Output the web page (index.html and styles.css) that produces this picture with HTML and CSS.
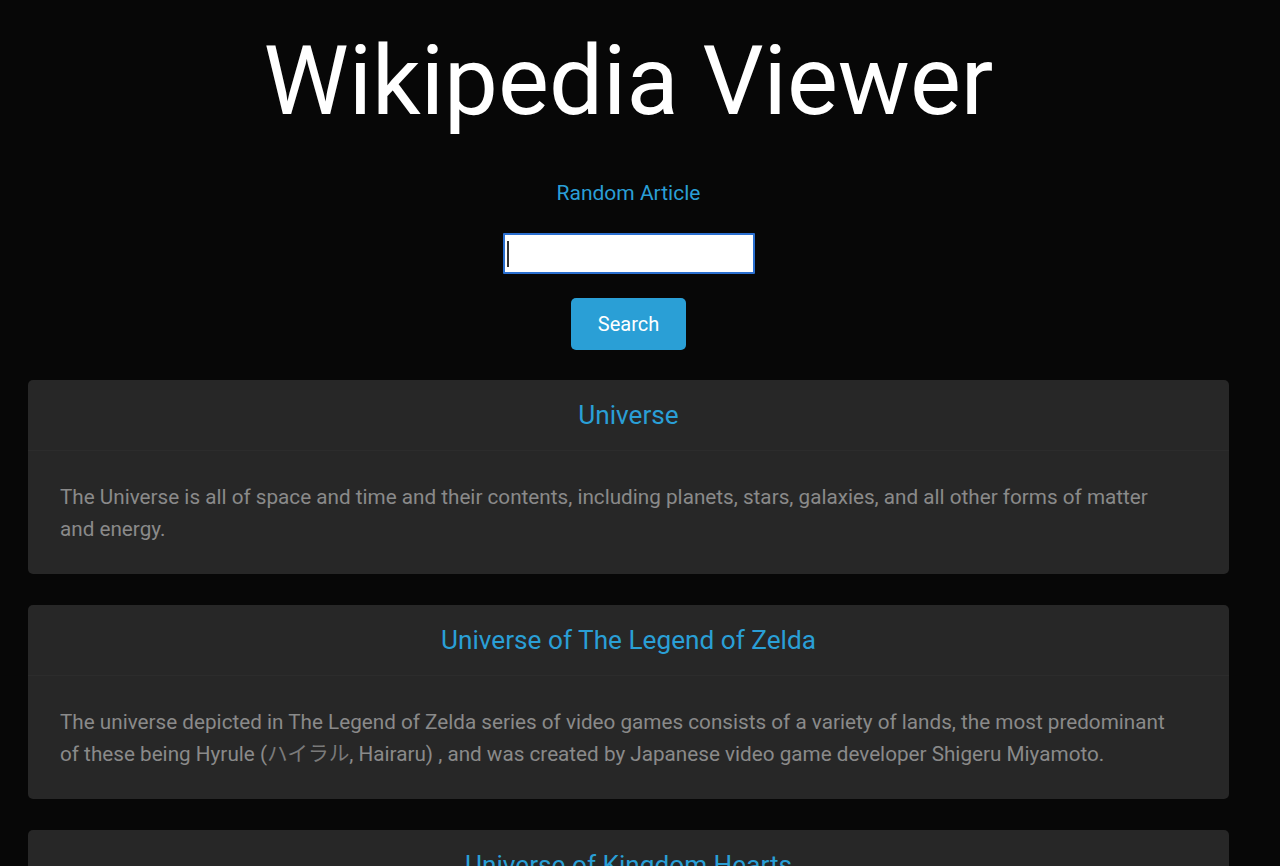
FILE: index.html
```html
<!DOCTYPE html>
<html lang="en">
<head>
<meta charset="utf-8">
<title>Wikipedia Viewer</title>
<link rel="stylesheet" href="styles.css">
</head>
<body>
<div class="page">
  <h1 class="title">Wikipedia Viewer</h1>
  <div class="controls">
    <a class="random" href="#">Random Article</a>
    <div class="input-wrap">
      <input class="search-input" type="text">
      <span class="caret"></span>
    </div>
    <button class="search-btn" type="button">Search</button>
  </div>
  <div class="results">
    <div class="card">
      <div class="card-head"><a href="#">Universe</a></div>
      <div class="card-body">The Universe is all of space and time and their contents, including planets, stars, galaxies, and all other forms of matter and energy.</div>
    </div>
    <div class="card">
      <div class="card-head"><a href="#">Universe of The Legend of Zelda</a></div>
      <div class="card-body">The universe depicted in The Legend of Zelda series of video games consists of a variety of lands, the most predominant of these being Hyrule (<span class="jp">ハイラル</span>, Hairaru) , and was created by Japanese video game developer Shigeru Miyamoto.</div>
    </div>
    <div class="card">
      <div class="card-head"><a href="#">Universe of Kingdom Hearts</a></div>
      <div class="card-body">The universe of the Kingdom Hearts series consists of many worlds.</div>
    </div>
  </div>
</div>
</body>
</html>
```
FILE: styles.css
```css
html, body {
  margin: 0;
  padding: 0;
  background: #070707;
  height: 100%;
  overflow: hidden;
}
body {
  font-family: Roboto, "Noto Sans CJK JP", sans-serif;
  color: #888;
}
.page {
  width: 1201px;
  padding: 0 28px;
}
.title {
  margin: 0;
  padding-top: 26px;
  text-align: center;
  font-weight: 400;
  font-size: 96px;
  line-height: 110px;
  color: #fff;
}
.controls {
  display: flex;
  flex-direction: column;
  align-items: center;
  margin-top: 43px;
}
.random {
  color: #2a9fd6;
  text-decoration: none;
  font-size: 21px;
  line-height: 28px;
}
.input-wrap {
  position: relative;
  margin-top: 26px;
}
.search-input {
  display: block;
  width: 252px;
  height: 41px;
  box-sizing: border-box;
  border: 2px solid #2a6fd0;
  background: #fff;
  outline: none;
  border-radius: 1px;
  font-size: 20px;
  padding: 0 6px;
}
.caret {
  position: absolute;
  left: 4px;
  top: 8px;
  width: 2px;
  height: 26px;
  background: #333;
}
.search-btn {
  margin-top: 24px;
  width: 115px;
  height: 52px;
  border: none;
  border-radius: 5px;
  background: #2a9fd6;
  color: #fff;
  font-family: Roboto, sans-serif;
  font-size: 20px;
}
.results {
  margin-top: 30px;
  display: flex;
  flex-direction: column;
  gap: 31px;
}
.card {
  background: #272727;
  border-radius: 5px;
}
.card-head {
  height: 70px;
  display: flex;
  align-items: center;
  justify-content: center;
  border-bottom: 1px solid #2c2c2c;
}
.card-head a {
  color: #2a9fd6;
  text-decoration: none;
  font-size: 26.2px;
}
.card-body {
  padding: 30px 57px 29px 32px;
  font-size: 20.7px;
  line-height: 32px;
  color: #8a8a8a;
}
.jp {
  font-size: 20.7px;
  color: #7a7a7a;
}
```
